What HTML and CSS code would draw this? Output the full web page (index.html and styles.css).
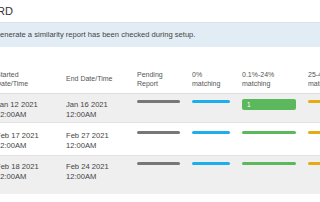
FILE: index.html
```html
<!DOCTYPE html>
<html lang="en">
<head>
  <meta charset="UTF-8" />
  <title>Similarity Dashboard</title>
  <link rel="stylesheet" href="styles.css">
</head>
<body>

<div class="page">
  <h1 class="title">RD</h1>

  <div class="notice">enerate a similarity report has been checked during setup.</div>

  <table class="reports">
    <colgroup>
      <col class="c-start">
      <col class="c-end">
      <col class="c-pending">
      <col class="c-zero">
      <col class="c-low">
      <col class="c-mid">
    </colgroup>
    <thead>
      <tr>
        <th>Started<br>Date/Time</th>
        <th>End Date/Time</th>
        <th>Pending<br>Report</th>
        <th>0%<br>matching</th>
        <th>0.1%-24%<br>matching</th>
        <th>25-49%<br>matching</th>
      </tr>
    </thead>
    <tbody>
      <tr class="row-1">
        <td>Jan 12 2021<br>12:00AM</td>
        <td>Jan 16 2021<br>12:00AM</td>
        <td><div class="bar pending"></div></td>
        <td><div class="bar zero"></div></td>
        <td><div class="count low">1</div></td>
        <td><div class="bar mid"></div></td>
      </tr>
      <tr class="row-2">
        <td>Feb 17 2021<br>12:00AM</td>
        <td>Feb 27 2021<br>12:00AM</td>
        <td><div class="bar pending"></div></td>
        <td><div class="bar zero"></div></td>
        <td><div class="bar low"></div></td>
        <td><div class="bar mid"></div></td>
      </tr>
      <tr class="row-3">
        <td>Feb 18 2021<br>12:00AM</td>
        <td>Feb 24 2021<br>12:00AM</td>
        <td><div class="bar pending"></div></td>
        <td><div class="bar zero"></div></td>
        <td><div class="bar low"></div></td>
        <td><div class="bar mid"></div></td>
      </tr>
    </tbody>
  </table>
</div>

</body>
</html>
```

FILE: styles.css
```css
body {
  margin: 0;
  padding: 0;
  font-family: 'Liberation Sans', Arial, sans-serif;
  color: #333;
  background: #fff;
  overflow: hidden;
}

.page {
  width: 320px;
  overflow: hidden;
}

.title {
  margin: 0 0 0 -3px;
  padding: 5px 0 0 0;
  font-size: 11px;
  line-height: 12px;
  font-weight: normal;
  color: #333;
}

.notice {
  margin-top: 5px;
  height: 24px;
  line-height: 24px;
  background: #e2ecf5;
  border-top: 1px solid #d6e3ef;
  font-size: 7.6px;
  color: #444;
  white-space: nowrap;
}

.reports {
  margin-left: -4px;
  margin-top: 24px;
  width: 340px;
  table-layout: fixed;
  border-collapse: collapse;
}

.c-start { width: 70px; }
.c-end { width: 71px; }
.c-pending { width: 55px; }
.c-zero { width: 50px; }
.c-low { width: 66px; }
.c-mid { width: 28px; }

.reports th {
  text-align: left;
  font-weight: normal;
  font-size: 7px;
  line-height: 8.5px;
  color: #555;
  vertical-align: middle;
  padding: 0 12px 5px 0;
  border-bottom: 1px solid #ddd;
  white-space: nowrap;
  overflow: hidden;
}

.reports td {
  font-size: 7.6px;
  line-height: 9.5px;
  color: #444;
  vertical-align: top;
  padding: 6px 12px 3px 0;
  white-space: nowrap;
  overflow: hidden;
}

.row-1, .row-3 {
  background: #efefef;
}

.row-2 td {
  padding-top: 8px;
  padding-bottom: 5px;
}

.row-3 td {
  padding-bottom: 13px;
}

.row-2, .row-3 {
  border-top: 1px solid #e2e2e2;
}

.bar {
  height: 3px;
  border-radius: 2px;
  margin-top: 0;
}

.pending { background: #777; }
.zero { background: #1eaeee; }
.low { background: #5cb85c; }
.mid { background: #e6ab13; }

.count {
  height: 11px;
  line-height: 11px;
  margin-top: -1px;
  border-radius: 2px;
  color: #fff;
  font-size: 6.5px;
  padding-left: 5px;
}
```
